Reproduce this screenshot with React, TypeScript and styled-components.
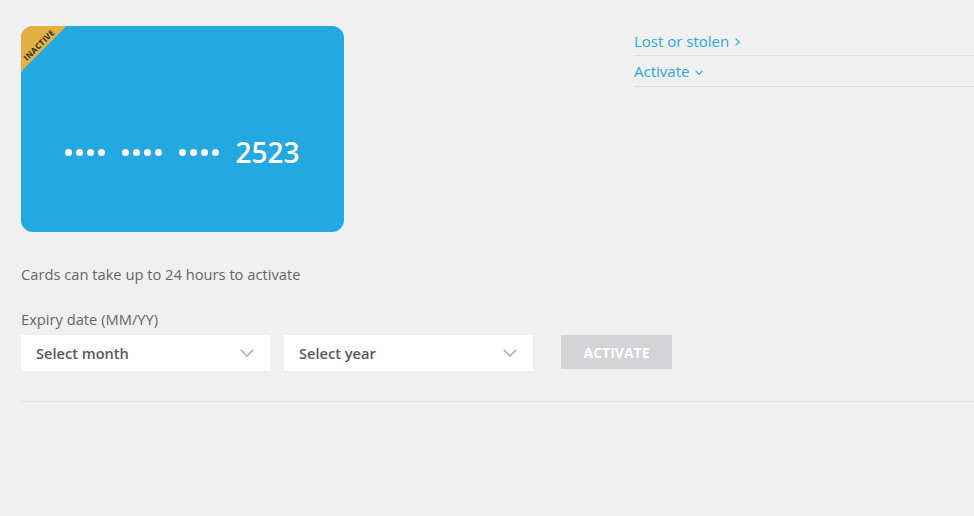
import styled, { createGlobalStyle } from 'styled-components';

const GlobalStyle = createGlobalStyle`
  body {
    margin: 0;
    background: #f0f0f0;
    font-family: 'Open Sans', 'Noto Sans', sans-serif;
  }
`;

const Page = styled.div`
  padding: 26px 0 0 21px;
  min-height: 490px;
`;

const Top = styled.div`
  display: flex;
  align-items: flex-start;
`;

const Card = styled.div`
  position: relative;
  width: 323px;
  height: 206px;
  border-radius: 12px;
  background: #23a8e0;
  overflow: hidden;
  display: flex;
  align-items: center;
  justify-content: center;
  gap: 17px;
  padding-top: 46px;
  box-sizing: border-box;
`;

const Banner = styled.div`
  position: absolute;
  top: 0;
  left: 0;
  width: 46px;
  height: 46px;
  background: linear-gradient(135deg, #e3b042 50%, transparent 50%);
`;

const BannerText = styled.span`
  position: absolute;
  top: 14px;
  left: -12px;
  width: 60px;
  text-align: center;
  transform: rotate(-45deg);
  font-size: 8px;
  font-weight: 700;
  letter-spacing: 0.4px;
  color: #2a2a2a;
  line-height: 10px;
`;

const DotGroup = styled.div`
  display: flex;
  gap: 4px;
`;

const Dot = styled.span`
  width: 7px;
  height: 7px;
  border-radius: 50%;
  background: #fff;
`;

const LastDigits = styled.span`
  color: #fff;
  font-size: 28px;
  font-weight: 600;
  margin-left: -1px;
`;

const Menu = styled.nav`
  margin-left: auto;
  width: 340px;
  display: flex;
  flex-direction: column;
`;

const MenuItem = styled.a`
  display: flex;
  align-items: center;
  gap: 6px;
  height: 30px;
  border-bottom: 1px solid #dedede;
  color: #26a9e0;
  font-size: 15px;
  text-decoration: none;
  &:first-child {
    padding-top: 1px;
    box-sizing: border-box;
  }
  svg {
    margin-top: 2px;
  }
`;

const Note = styled.p`
  margin: 32px 0 0;
  font-size: 14.7px;
  color: #666;
`;

const Label = styled.div`
  margin-top: 25px;
  font-size: 14.7px;
  color: #666;
`;

const Form = styled.div`
  display: flex;
  align-items: flex-start;
  gap: 14px;
  margin-top: 6px;
`;

const Select = styled.div`
  width: 249px;
  height: 36px;
  background: #fff;
  display: flex;
  align-items: center;
  justify-content: space-between;
  padding: 0 16px 0 15px;
  box-sizing: border-box;
  font-size: 14.6px;
  font-weight: 600;
  color: #5a5a5a;
`;

const Button = styled.button`
  margin-left: 14px;
  width: 111px;
  height: 34px;
  border: none;
  background: #d4d4d6;
  color: #fff;
  font-family: inherit;
  font-size: 14px;
  font-weight: 700;
`;

const Rule = styled.hr`
  margin: 30px 0 0;
  border: none;
  border-top: 1px solid #e2e2e2;
`;

function Chevron({
  dir,
  w,
  h,
  color,
  stroke = 1.3,
}: {
  dir: 'right' | 'down';
  w: number;
  h: number;
  color: string;
  stroke?: number;
}) {
  const s = stroke / 2;
  const d =
    dir === 'right'
      ? `M${s} ${s} L${w - s} ${h / 2} L${s} ${h - s}`
      : `M${s} ${s} L${w / 2} ${h - s} L${w - s} ${s}`;
  return (
    <svg width={w} height={h} viewBox={`0 0 ${w} ${h}`} fill="none">
      <path d={d} stroke={color} strokeWidth={stroke} />
    </svg>
  );
}

export default function App() {
  return (
    <>
      <GlobalStyle />
      <Page>
        <Top>
          <Card>
            <Banner>
              <BannerText>INACTIVE</BannerText>
            </Banner>
            {[0, 1, 2].map((g) => (
              <DotGroup key={g}>
                {[0, 1, 2, 3].map((i) => (
                  <Dot key={i} />
                ))}
              </DotGroup>
            ))}
            <LastDigits>2523</LastDigits>
          </Card>
          <Menu>
            <MenuItem href="#">
              Lost or stolen <Chevron dir="right" w={5} h={8} color="#26a9e0" stroke={1.2} />
            </MenuItem>
            <MenuItem href="#">
              Activate <Chevron dir="down" w={8} h={5} color="#26a9e0" stroke={1.2} />
            </MenuItem>
          </Menu>
        </Top>
        <Note>Cards can take up to 24 hours to activate</Note>
        <Label>Expiry date (MM/YY)</Label>
        <Form>
          <Select>
            Select month <Chevron dir="down" w={14} h={8} color="#b5b5b5" stroke={1.8} />
          </Select>
          <Select>
            Select year <Chevron dir="down" w={14} h={8} color="#b5b5b5" stroke={1.8} />
          </Select>
          <Button>ACTIVATE</Button>
        </Form>
        <Rule />
      </Page>
    </>
  );
}
